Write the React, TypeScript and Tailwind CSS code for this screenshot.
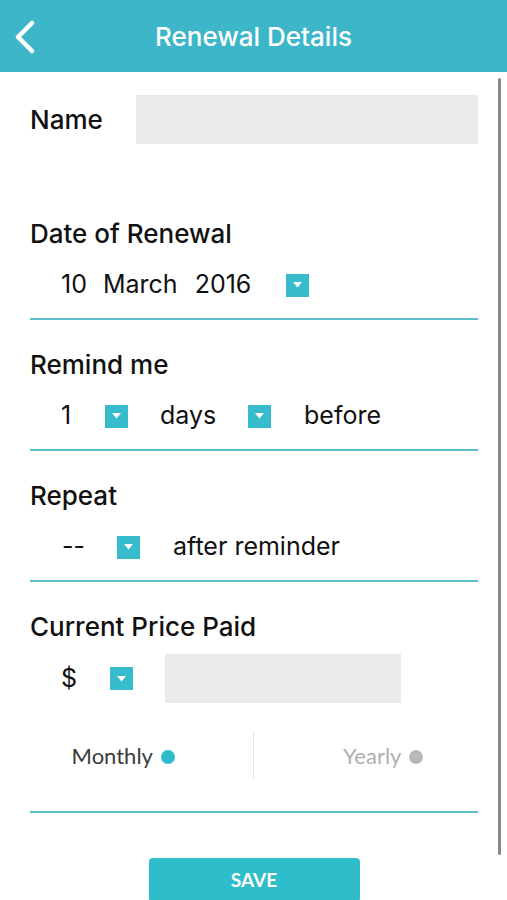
import React from "react";

const font = { fontFamily: "Inter, 'Noto Sans', sans-serif" };

const DropBox = ({ className = "" }: { className?: string }) => (
    <span className={`flex items-center justify-center w-[23px] h-[23px] bg-[#36bccd] ${className}`}>
        <svg width="9" height="6" viewBox="0 0 9 6">
            <polygon points="0,0 9,0 4.5,5.5" fill="#ffffff" />
        </svg>
    </span>
);

const Section = ({ label, children, first }: { label: string; children: React.ReactNode; first?: boolean }) => (
    <div className={first ? "mt-[75px]" : "mt-[30px]"}>
        <div className="h-[30px] leading-[30px] text-[26px] font-medium text-[#111]">{label}</div>
        {children}
    </div>
);

export default function App() {
    return (
        <div className="relative w-[507px] h-[900px] overflow-hidden bg-white" style={font}>
            {/* Header */}
            <div className="relative h-[72px] bg-[#3db6c9] flex items-center justify-center">
                <svg className="absolute left-[13px] top-[20px]" width="24" height="34" viewBox="0 0 24 34">
                    <polyline points="19,3 5,17 19,31" fill="none" stroke="#ffffff" strokeWidth="4.5" strokeLinecap="round" strokeLinejoin="round" />
                </svg>
                <h1 className="text-[26px] font-medium text-white">Renewal Details</h1>
            </div>

            {/* Scrollbar */}
            <div className="absolute right-[6px] top-[78px] w-[3px] h-[777px] rounded-full bg-[#8a8a8a]"></div>

            <div className="pl-[30px] pr-[29px]">
                {/* Name */}
                <div className="mt-[23px] flex items-center">
                    <span className="w-[106px] text-[26px] font-medium text-[#111]">Name</span>
                    <div className="flex-1 h-[49px] bg-[#e9eaec]"></div>
                </div>

                <Section label="Date of Renewal" first>
                    <div className="mt-[16px] h-[40px] flex items-center text-[25px] text-[#111]">
                        <span className="ml-[31px]">10</span>
                        <span className="ml-[16px]">March</span>
                        <span className="ml-[17px]">2016</span>
                        <DropBox className="ml-[35px]" />
                    </div>
                    <div className="mt-[13px] h-[2px] bg-[#5bbfcd]"></div>
                </Section>

                <Section label="Remind me">
                    <div className="mt-[16px] h-[40px] flex items-center text-[25px] text-[#111]">
                        <span className="ml-[31px] w-[44px]">1</span>
                        <DropBox />
                        <span className="ml-[32px] w-[88px]">days</span>
                        <DropBox />
                        <span className="ml-[33px]">before</span>
                    </div>
                    <div className="mt-[13px] h-[2px] bg-[#5bbfcd]"></div>
                </Section>

                <Section label="Repeat">
                    <div className="mt-[16px] h-[40px] flex items-center text-[25px] text-[#111]">
                        <span className="ml-[32px] w-[55px]">--</span>
                        <DropBox />
                        <span className="ml-[33px]">after reminder</span>
                    </div>
                    <div className="mt-[13px] h-[2px] bg-[#5bbfcd]"></div>
                </Section>

                <Section label="Current Price Paid">
                    <div className="mt-[12px] h-[49px] flex items-center text-[25px] text-[#111]">
                        <span className="ml-[31px] w-[49px]">$</span>
                        <DropBox />
                        <div className="ml-[32px] w-[236px] h-[49px] bg-[#e9eaec]"></div>
                    </div>
                </Section>

                {/* Monthly / Yearly */}
                <div className="mt-[28px] -ml-[30px] -mr-[29px] h-[48px] grid grid-cols-2" style={{ fontFamily: "Lato, 'Open Sans', sans-serif" }}>
                    <div className="flex items-center justify-center gap-[8px] pr-[6px] text-[22px] text-[#3a3a3a] border-r border-[#e8e8e8]">
                        <span>Monthly</span>
                        <span className="w-[14px] h-[14px] rounded-full bg-[#2fbccc] mt-[3px]"></span>
                    </div>
                    <div className="flex items-center justify-center gap-[8px] text-[22px] text-[#b0b0b0] pl-[6px]">
                        <span>Yearly</span>
                        <span className="w-[14px] h-[14px] rounded-full bg-[#b8b8b8] mt-[3px]"></span>
                    </div>
                </div>

                <div className="mt-[32px] h-[2px] bg-[#5bbfcd]"></div>

                <div className="mt-[45px] flex justify-center">
                    <button className="w-[211px] h-[44px] rounded-[4px] bg-[#2fbdcc] text-white text-[19px] font-bold" style={{ fontFamily: "Lato, 'Open Sans', sans-serif" }}>
                        SAVE
                    </button>
                </div>
            </div>
        </div>
    );
}
